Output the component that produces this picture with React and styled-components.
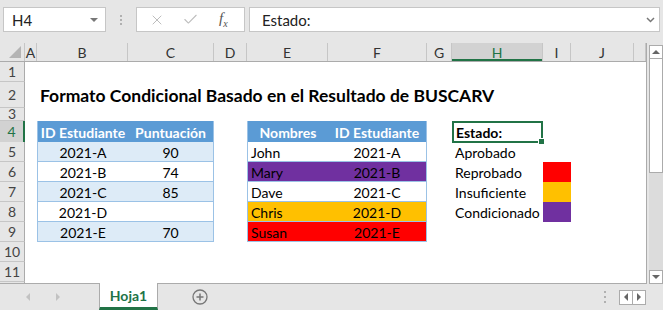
import styled, { createGlobalStyle } from "styled-components";
import { X, Check } from "lucide-react";

const GlobalStyle = createGlobalStyle`
  body {
    margin: 0;
    background: #e6e6e6;
    font-family: Lato, "Liberation Sans", sans-serif;
  }
`;

const COLS = "25px 12px 91px 86px 33px 81px 99px 25px 91px 28px 63px 12px";
const LETTERS = ["A", "B", "C", "D", "E", "F", "G", "H", "I", "J", ""];
const GREEN = "#217346";
const BLUE_HEAD = "#5b9bd5";
const BAND = "#ddebf7";
const LINE = "#9bc2e6";
const PURPLE = "#7030a0";
const ORANGE = "#ffc000";
const RED = "#ff0000";

const Window = styled.div`
  width: 663px;
  height: 310px;
  overflow: hidden;
  display: flex;
  flex-direction: column;
  background: #e6e6e6;
`;

const TopBar = styled.div`
  height: 43px;
  display: flex;
  align-items: flex-start;
  padding: 7px 3px 0 3px;
  box-sizing: border-box;
`;

const NameBox = styled.div`
  width: 103px;
  height: 25px;
  box-sizing: border-box;
  background: #fff;
  border: 1px solid #c6c6c6;
  display: flex;
  align-items: center;
  justify-content: space-between;
  padding: 0 7px 0 8px;
  font-size: 15px;
  color: #222;
`;

const DropTriangle = styled.span`
  width: 0;
  height: 0;
  border-left: 4px solid transparent;
  border-right: 4px solid transparent;
  border-top: 4px solid #777;
`;

const Grip = styled.div`
  width: 30px;
  height: 25px;
  display: flex;
  flex-direction: column;
  align-items: center;
  justify-content: center;
  gap: 2px;
`;

const GripDot = styled.span`
  width: 2px;
  height: 2px;
  background: #b0b0b0;
`;

const FxButtons = styled.div`
  width: 109px;
  height: 25px;
  box-sizing: border-box;
  background: #fff;
  border: 1px solid #c6c6c6;
  display: flex;
  align-items: center;
  padding-left: 12px;
  gap: 17px;
  color: #bdbdbd;
`;

const FxLabel = styled.span`
  font-family: "Liberation Serif", serif;
  font-style: italic;
  font-size: 15px;
  color: #555;
  margin-left: 3px;

  sub {
    font-size: 10px;
  }
`;

const FormulaInput = styled.div`
  flex: 1;
  margin-left: 4px;
  height: 25px;
  box-sizing: border-box;
  background: #fff;
  border: 1px solid #c6c6c6;
  display: flex;
  align-items: center;
  justify-content: space-between;
  padding: 0 4px 0 12px;
  font-size: 15px;
  color: #222;
`;

const SheetArea = styled.div`
  height: 241px;
  display: flex;
`;

const Grid = styled.div`
  width: 647px;
  box-sizing: border-box;
  border-right: 1px solid #ababab;
  border-bottom: 1px solid #ababab;
  overflow: hidden;
  background: #fff;
`;

const Row = styled.div`
  display: grid;
  grid-template-columns: ${COLS};
  height: ${(p) => p.$h}px;
`;

const HeaderRow = styled(Row)`
  background: #e6e6e6;
  border-bottom: 1px solid #ababab;
  box-sizing: border-box;
`;

const Corner = styled.div`
  position: relative;
  border-right: 1px solid #c6c6c6;

  &::after {
    content: "";
    position: absolute;
    right: 3px;
    bottom: 3px;
    border-left: 12px solid transparent;
    border-bottom: 12px solid #b4b4b4;
  }
`;

const ColHead = styled.div`
  display: flex;
  align-items: center;
  justify-content: center;
  font-size: 14px;
  color: ${(p) => (p.$active ? GREEN : "#333")};
  background: ${(p) => (p.$active ? "#d2d2d2" : "transparent")};
  border-right: 1px solid #c6c6c6;
  box-shadow: ${(p) => (p.$active ? `inset 0 -2px 0 ${GREEN}` : "none")};
`;

const RowHead = styled.div`
  display: flex;
  align-items: center;
  justify-content: center;
  line-height: 12px;
  font-size: 14px;
  color: ${(p) => (p.$active ? GREEN : "#444")};
  background: ${(p) => (p.$active ? "#d2d2d2" : "#e6e6e6")};
  border-bottom: 1px solid #c6c6c6;
  border-right: ${(p) => (p.$active ? `2px solid ${GREEN}` : "1px solid #ababab")};
  box-sizing: border-box;
`;

const Cell = styled.div`
  position: relative;
  display: flex;
  align-items: center;
  justify-content: ${(p) => p.$align || "flex-start"};
  padding: 1px 3px 0;
  box-sizing: border-box;
  white-space: nowrap;
  font-size: 14px;
  font-weight: ${(p) => (p.$bold ? 700 : 400)};
  color: ${(p) => p.$color || "#000"};
  background: ${(p) => p.$bg || "transparent"};
  border-left: ${(p) => (p.$bl ? `1px solid ${LINE}` : "none")};
  border-right: ${(p) => (p.$br ? `1px solid ${LINE}` : "none")};
  border-bottom: ${(p) => (p.$bb ? `1px solid ${LINE}` : "none")};
`;

const Title = styled(Cell)`
  overflow: visible;
  font-size: 17.5px;
  font-weight: 700;
  padding-left: 3px;
  z-index: 1;
`;

const ActiveCell = styled(Cell)`
  border: 2px solid ${GREEN};
  padding-left: 2px;
`;

const FillHandle = styled.span`
  position: absolute;
  right: -4px;
  bottom: -4px;
  width: 5px;
  height: 5px;
  background: ${GREEN};
  border: 1px solid #fff;
`;

const ScrollBar = styled.div`
  width: 14px;
  margin-left: 2px;
  padding-top: 2px;
  display: flex;
  flex-direction: column;
`;

const ScrollButton = styled.div`
  height: 14px;
  box-sizing: border-box;
  background: #fff;
  border: 1px solid #ababab;
  display: flex;
  align-items: center;
  justify-content: center;

  &::after {
    content: "";
    border-left: 4px solid transparent;
    border-right: 4px solid transparent;
    ${(p) => (p.$down ? "border-top" : "border-bottom")}: 4px solid #666;
  }
`;

const Thumb = styled.div`
  height: 114px;
  box-sizing: border-box;
  background: #fff;
  border: 1px solid #ababab;
  border-top: none;
`;

const Track = styled.div`
  flex: 1;
  background: #dcdcdc;
`;

const TabBar = styled.div`
  height: 26px;
  display: flex;
  align-items: stretch;
  background: #e6e6e6;
`;

const NavArrows = styled.div`
  width: 99px;
  display: flex;
  align-items: center;
  padding-left: 26px;
  gap: 26px;
  box-sizing: border-box;
`;

const Arrow = styled.span`
  width: 0;
  height: 0;
  border-top: 4px solid transparent;
  border-bottom: 4px solid transparent;
  ${(p) => (p.$right ? "border-left" : "border-right")}: 4px solid ${(p) => p.$c || "#c2c2c2"};
`;

const SheetTab = styled.div`
  width: 59px;
  box-sizing: border-box;
  background: #fff;
  border-left: 1px solid #ababab;
  border-right: 1px solid #ababab;
  border-bottom: 3px solid ${GREEN};
  margin-top: -1px;
  display: flex;
  align-items: center;
  justify-content: center;
  font-size: 14px;
  font-weight: 700;
  color: ${GREEN};
`;

const AddSheet = styled.div`
  width: 84px;
  display: flex;
  align-items: center;
  justify-content: center;
  color: #777;
`;

const TabSpacer = styled.div`
  flex: 1;
`;

const HScrollNav = styled.div`
  display: flex;
  align-items: center;
  gap: 13px;
  padding-right: 17px;
`;

const NavBox = styled.div`
  display: flex;
  border: 1px solid #ababab;
  height: 15px;
  box-sizing: border-box;
`;

const NavCell = styled.div`
  width: 12px;
  display: flex;
  align-items: center;
  justify-content: center;
  background: #fff;

  & + & {
    border-left: 1px solid #ababab;
  }
`;

const VDots = styled(Grip)`
  width: 2px;
  gap: 3px;
`;

const head = (t, first, last) => ({ t, kind: "head", first, last });
const t1 = (t, band, first, last) => ({ t, kind: "body", bg: band ? BAND : "#fff", first, last, align: "center" });
const t2 = (t, bg, first, last, align) => ({ t, kind: "body", bg, first, last, align });
const txt = (t) => ({ t, kind: "plain" });
const swatch = (bg) => ({ t: "", kind: "swatch", bg });

// row 12 is only a sliver at the bottom edge, so it gets no label
const rows = [
  { n: 1, h: 20 },
  { n: 2, h: 26, cells: { B: { t: "Formato Condicional Basado en el Resultado de BUSCARV", kind: "title" } } },
  { n: 3, h: 13 },
  {
    n: 4, h: 21, active: true,
    cells: {
      B: head("ID Estudiante", true, false), C: head("Puntuación", false, true),
      E: head("Nombres", true, false), F: head("ID Estudiante", false, true),
      H: { t: "Estado:", kind: "active" },
    },
  },
  {
    n: 5, h: 20,
    cells: {
      B: t1("2021-A", true, true), C: t1("90", true, false, true),
      E: t2("John", "#fff", true), F: t2("2021-A", "#fff", false, true, "center"),
      H: txt("Aprobado"),
    },
  },
  {
    n: 6, h: 20,
    cells: {
      B: t1("2021-B", false, true), C: t1("74", false, false, true),
      E: t2("Mary", PURPLE, true), F: t2("2021-B", PURPLE, false, true, "center"),
      H: txt("Reprobado"), I: swatch(RED),
    },
  },
  {
    n: 7, h: 20,
    cells: {
      B: t1("2021-C", true, true), C: t1("85", true, false, true),
      E: t2("Dave", "#fff", true), F: t2("2021-C", "#fff", false, true, "center"),
      H: txt("Insuficiente"), I: swatch(ORANGE),
    },
  },
  {
    n: 8, h: 20,
    cells: {
      B: t1("2021-D", false, true), C: t1("", false, false, true),
      E: t2("Chris", ORANGE, true), F: t2("2021-D", ORANGE, false, true, "center"),
      H: txt("Condicionado"), I: swatch(PURPLE),
    },
  },
  {
    n: 9, h: 20,
    cells: {
      B: t1("2021-E", true, true), C: t1("70", true, false, true),
      E: t2("Susan", RED, true), F: t2("2021-E", RED, false, true, "center"),
    },
  },
  { n: 10, h: 20 },
  { n: 11, h: 20 },
  { n: 12, h: 20, hideLabel: true },
];

function renderCell(col, c) {
  if (!c) return <Cell key={col} />;
  switch (c.kind) {
    case "title":
      return <Title key={col}>{c.t}</Title>;
    case "head":
      return (
        <Cell key={col} $bg={BLUE_HEAD} $color="#fff" $bold $align="center" $bl={c.first} $br={c.last}>
          {c.t}
        </Cell>
      );
    case "body":
      return (
        <Cell key={col} $bg={c.bg} $align={c.align} $bl={c.first} $br={c.last} $bb>
          {c.t}
        </Cell>
      );
    case "active":
      return (
        <ActiveCell key={col} $bold>
          {c.t}
          <FillHandle />
        </ActiveCell>
      );
    case "swatch":
      return <Cell key={col} $bg={c.bg} />;
    default:
      return <Cell key={col}>{c.t}</Cell>;
  }
}

export default function App() {
  return (
    <Window>
      <GlobalStyle />
      <TopBar>
        <NameBox>
          H4
          <DropTriangle />
        </NameBox>
        <Grip>
          <GripDot />
          <GripDot />
          <GripDot />
        </Grip>
        <FxButtons>
          <X size={16} strokeWidth={1.5} />
          <Check size={17} strokeWidth={1.5} />
          <FxLabel>
            f<sub>x</sub>
          </FxLabel>
        </FxButtons>
        <FormulaInput>
          Estado:
          <svg width="9" height="6" viewBox="0 0 9 6">
            <path d="M1 1 L4.5 4.5 L8 1" fill="none" stroke="#777" strokeWidth="1.5" />
          </svg>
        </FormulaInput>
      </TopBar>

      <SheetArea>
        <Grid>
          <HeaderRow $h={19}>
            <Corner />
            {LETTERS.map((l, i) => (
              <ColHead key={i} $active={l === "H"}>
                {l}
              </ColHead>
            ))}
          </HeaderRow>
          {rows.map((r) => (
            <Row key={r.n} $h={r.h}>
              <RowHead $active={r.active}>{r.hideLabel ? "" : r.n}</RowHead>
              {LETTERS.map((l, i) => renderCell(l || "K" + i, r.cells && r.cells[l]))}
            </Row>
          ))}
        </Grid>
        <ScrollBar>
          <ScrollButton />
          <Thumb />
          <Track />
          <ScrollButton $down />
        </ScrollBar>
      </SheetArea>

      <TabBar>
        <NavArrows>
          <Arrow />
          <Arrow $right />
        </NavArrows>
        <SheetTab>Hoja1</SheetTab>
        <AddSheet>
          <svg width="16" height="16" viewBox="0 0 16 16">
            <circle cx="8" cy="8" r="7" fill="none" stroke="#777" strokeWidth="1.3" />
            <path d="M8 4.5 V11.5 M4.5 8 H11.5" stroke="#777" strokeWidth="1.5" />
          </svg>
        </AddSheet>
        <TabSpacer />
        <HScrollNav>
          <VDots>
            <GripDot />
            <GripDot />
            <GripDot />
          </VDots>
          <NavBox>
            <NavCell>
              <Arrow $c="#666" />
            </NavCell>
            <NavCell>
              <Arrow $right $c="#666" />
            </NavCell>
          </NavBox>
        </HScrollNav>
      </TabBar>
    </Window>
  );
}
